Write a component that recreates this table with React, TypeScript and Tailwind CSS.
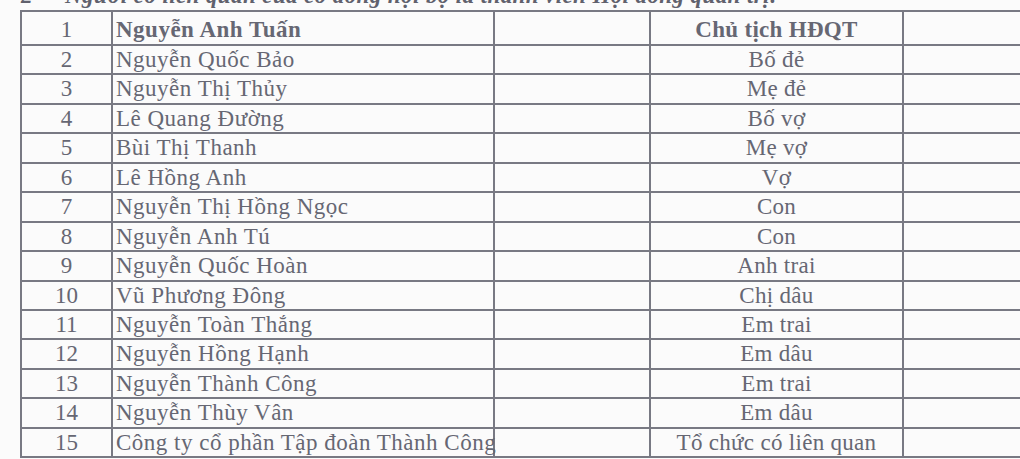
import React from "react";

const rows: { n: string; name: string; rel: string; h: string }[] = [
  { n: "2", name: "Nguyễn Quốc Bảo", rel: "Bố đẻ", h: "h-[29px]" },
  { n: "3", name: "Nguyễn Thị Thủy", rel: "Mẹ đẻ", h: "h-[30px]" },
  { n: "4", name: "Lê Quang Đường", rel: "Bố vợ", h: "h-[29px]" },
  { n: "5", name: "Bùi Thị Thanh", rel: "Mẹ vợ", h: "h-[30px]" },
  { n: "6", name: "Lê Hồng Anh", rel: "Vợ", h: "h-[29px]" },
  { n: "7", name: "Nguyễn Thị Hồng Ngọc", rel: "Con", h: "h-[30px]" },
  { n: "8", name: "Nguyễn Anh Tú", rel: "Con", h: "h-[29px]" },
  { n: "9", name: "Nguyễn Quốc Hoàn", rel: "Anh trai", h: "h-[30px]" },
  { n: "10", name: "Vũ Phương Đông", rel: "Chị dâu", h: "h-[29px]" },
  { n: "11", name: "Nguyễn Toàn Thắng", rel: "Em trai", h: "h-[29px]" },
  { n: "12", name: "Nguyễn Hồng Hạnh", rel: "Em dâu", h: "h-[30px]" },
  { n: "13", name: "Nguyễn Thành Công", rel: "Em trai", h: "h-[29px]" },
  { n: "14", name: "Nguyễn Thùy Vân", rel: "Em dâu", h: "h-[30px]" },
  { n: "15", name: "Công ty cổ phần Tập đoàn Thành Công", rel: "Tổ chức có liên quan", h: "h-[29px]" },
];

function Row({
  n,
  name,
  rel,
  h,
  bold,
}: {
  n: string;
  name: string;
  rel: string;
  h: string;
  bold?: boolean;
}) {
  const pad = bold ? "pt-[4px]" : "";
  return (
    <div className={`flex ${h} border-b-2 border-[#787983]`}>
      <div className={`w-[91px] shrink-0 border-r-2 border-[#787983] text-center leading-[27px] ${pad}`}>{n}</div>
      <div
        className={`w-[382px] shrink-0 border-r-2 border-[#787983] pl-[3px] leading-[27px] whitespace-nowrap tracking-[0.5px] ${pad} ${
          bold ? "font-bold" : ""
        }`}
      >
        {name}
      </div>
      <div className="w-[156px] shrink-0 border-r-2 border-[#787983]" />
      <div
        className={`w-[253px] shrink-0 border-r-2 border-[#787983] text-center leading-[27px] whitespace-nowrap tracking-[0.3px] ${pad} ${
          bold ? "font-bold" : ""
        }`}
      >
        {rel}
      </div>
      <div className="w-[200px] shrink-0" />
    </div>
  );
}

export default function App() {
  return (
    <div
      className="w-[1020px] h-[459px] overflow-hidden bg-[#fbfbfb] text-[23px] text-[#666773]"
      style={{ fontFamily: '"Liberation Serif", "Times New Roman", serif' }}
    >
      <div className="h-[10px] flex">
        <div className="-mt-[15px] flex h-[22px] leading-[22px] font-bold italic text-[#60616d] whitespace-nowrap">
          <span className="ml-[21px] w-[44px]">2</span>
          <span className="tracking-[0.4px]">
            Người có liên quan của cổ đông nội bộ là thành viên Hội đồng quản trị:
          </span>
        </div>
      </div>
      <div className="ml-[20px] w-[1100px] border-t-2 border-l-2 border-[#787983]">
        <Row n="1" name="Nguyễn Anh Tuấn" rel="Chủ tịch HĐQT" h="h-[34px]" bold />
        {rows.map((r) => (
          <Row key={r.n} n={r.n} name={r.name} rel={r.rel} h={r.h} />
        ))}
      </div>
    </div>
  );
}
